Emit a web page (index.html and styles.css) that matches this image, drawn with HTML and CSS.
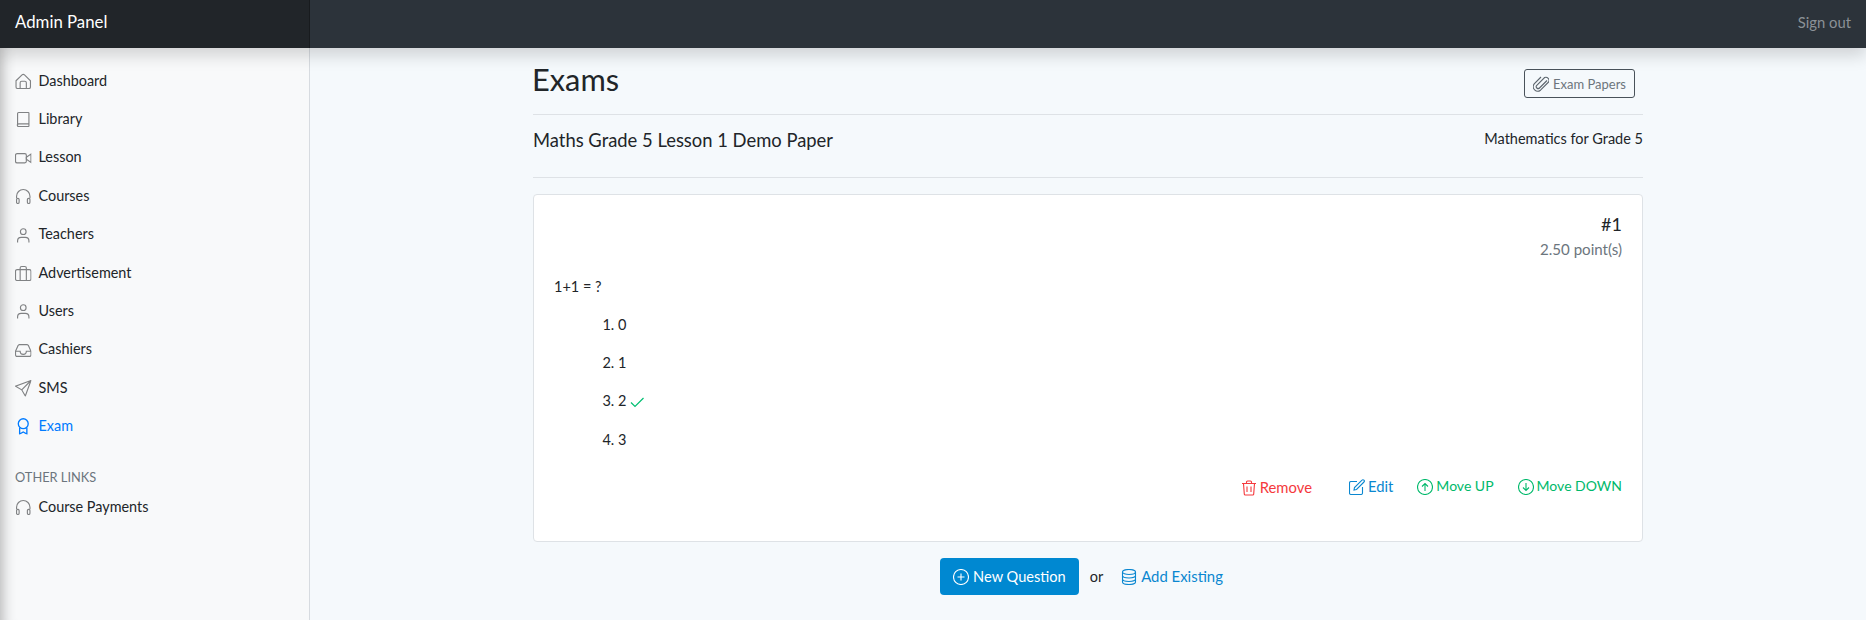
FILE: index.html
```html
<!DOCTYPE html>
<html lang="en">
<head>
<meta charset="utf-8">
<title>Admin Panel</title>
<link rel="stylesheet" href="styles.css">
</head>
<body>
<svg class="defs" width="0" height="0" aria-hidden="true">
  <symbol id="i-house" viewBox="0 0 16 16"><path d="M1 7.500 6.800 1.900a1.700 1.700 0 0 1 2.400 0L15 7.500v6a1.500 1.500 0 0 1-1.500 1.500h-11A1.500 1.500 0 0 1 1 13.500z"/><path d="M5 15V9.500a1.500 1.500 0 0 1 1.500-1.500h3A1.500 1.500 0 0 1 11 9.500V15"/></symbol>
  <symbol id="i-book" viewBox="0 0 16 16"><path d="M2.500 13V2.500a1 1 0 0 1 1-1h9.500a.5.500 0 0 1 .5.500V12.500H3.500a1.250 1.250 0 0 0 0 2.500H13a.5.500 0 0 0 .5-.5v-2"/><path d="M2.500 13v.750"/></symbol>
  <symbol id="i-video" viewBox="0 0 16 16"><rect x=".5" y="3.500" width="10.500" height="9" rx="1.500"/><path d="m11 7 4.500-3v8L11 9z"/></symbol>
  <symbol id="i-headphones" viewBox="0 0 16 16"><path d="M1.500 10V8a6.500 6.500 0 0 1 13 0v2"/><rect x="1.500" y="10" width="2.500" height="5" rx="1.250"/><rect x="12" y="10" width="2.500" height="5" rx="1.250"/></symbol>
  <symbol id="i-person" viewBox="0 0 16 16"><circle cx="8" cy="4.500" r="2.750"/><path d="M2.500 15v-1.500c0-2 1.500-3.500 3.500-3.500h4c2 0 3.500 1.500 3.500 3.500V15"/></symbol>
  <symbol id="i-briefcase" viewBox="0 0 16 16"><rect x=".5" y="4.500" width="15" height="10.500" rx="1.500"/><path d="M5 15V3a1.500 1.500 0 0 1 1.500-1.500h3A1.500 1.500 0 0 1 11 3v12"/></symbol>
  <symbol id="i-inbox" viewBox="0 0 16 16"><path d="M.5 9 3 3.500a1.500 1.500 0 0 1 1.300-1h7.400a1.500 1.500 0 0 1 1.300 1L15.500 9v3.500a1.500 1.500 0 0 1-1.500 1.500H2a1.500 1.500 0 0 1-1.500-1.500z"/><path d="M.5 9H5a3 3 0 0 0 6 0h4.500"/></symbol>
  <symbol id="i-send" viewBox="0 0 16 16"><path d="M15.500.5.500 6l6 3.500 3.500 6zM15.500.5l-9 9"/></symbol>
  <symbol id="i-award" viewBox="0 0 16 16"><circle cx="8" cy="5.500" r="4.800"/><path d="M4.500 9.500V15.500L8 13.500l3.500 2V9.500"/></symbol>
  <symbol id="i-clip" viewBox="0 0 16 16"><path d="M14 4.500 6.500 12a1.900 1.900 0 0 1-2.700-2.700l7.800-7.800a3.200 3.200 0 0 1 4 4.500L7.500 14.200a4.500 4.500 0 0 1-6.300-6.300L8 1"/></symbol>
  <symbol id="i-trash" viewBox="0 0 16 16"><path d="M1 3.500h14M5.500 3.500V2a1 1 0 0 1 1-1h3a1 1 0 0 1 1 1v1.500M2.500 3.500l.8 10.600a1 1 0 0 0 1 .9h7.400a1 1 0 0 0 1-.9l.8-10.600M6 6.500v5.500M10 6.500v5.500"/></symbol>
  <symbol id="i-edit" viewBox="0 0 16 16"><path d="M8 2.500H2A1.500 1.500 0 0 0 .5 4v10A1.500 1.500 0 0 0 2 15.500h10a1.500 1.500 0 0 0 1.500-1.500V8"/><path d="M13 1.200a1.300 1.300 0 0 1 2 1.800L7.500 10.500 5 11l.5-2.500z"/></symbol>
  <symbol id="i-up" viewBox="0 0 16 16"><circle cx="8" cy="8" r="7.500"/><path d="M8 12V4.800M5 7.500l3-3 3 3"/></symbol>
  <symbol id="i-down" viewBox="0 0 16 16"><circle cx="8" cy="8" r="7.500"/><path d="M8 4v7.200M5 8.500l3 3 3-3"/></symbol>
  <symbol id="i-plus" viewBox="0 0 16 16"><circle cx="8" cy="8" r="7.500"/><path d="M8 4.500v7M4.500 8h7"/></symbol>
  <symbol id="i-db" viewBox="0 0 16 16"><ellipse cx="8" cy="3" rx="6.500" ry="2.500"/><path d="M1.500 3v10c0 1.400 2.900 2.500 6.500 2.500s6.500-1.100 6.500-2.500V3M1.500 6.500c0 1.400 2.900 2.500 6.500 2.500s6.500-1.100 6.500-2.500M1.500 10c0 1.400 2.900 2.500 6.500 2.500s6.500-1.100 6.500-2.500"/></symbol>
  <symbol id="i-check" viewBox="0 0 16 16"><path d="M2 8.500 6 12.500 14.500 4"/></symbol>
</svg>

<header class="topbar">
  <a class="brand">Admin Panel</a>
  <div class="topbar-rest"><a class="signout">Sign out</a></div>
</header>

<div class="shell">
  <nav class="sidebar">
    <ul class="nav-list">
      <li class="nav-item"><svg class="ico"><use href="#i-house"/></svg><span>Dashboard</span></li>
      <li class="nav-item"><svg class="ico"><use href="#i-book"/></svg><span>Library</span></li>
      <li class="nav-item"><svg class="ico"><use href="#i-video"/></svg><span>Lesson</span></li>
      <li class="nav-item"><svg class="ico"><use href="#i-headphones"/></svg><span>Courses</span></li>
      <li class="nav-item"><svg class="ico"><use href="#i-person"/></svg><span>Teachers</span></li>
      <li class="nav-item"><svg class="ico"><use href="#i-briefcase"/></svg><span>Advertisement</span></li>
      <li class="nav-item"><svg class="ico"><use href="#i-person"/></svg><span>Users</span></li>
      <li class="nav-item"><svg class="ico"><use href="#i-inbox"/></svg><span>Cashiers</span></li>
      <li class="nav-item"><svg class="ico"><use href="#i-send"/></svg><span>SMS</span></li>
      <li class="nav-item is-active"><svg class="ico"><use href="#i-award"/></svg><span>Exam</span></li>
    </ul>
    <h6 class="nav-heading">OTHER LINKS</h6>
    <ul class="nav-list">
      <li class="nav-item"><svg class="ico"><use href="#i-headphones"/></svg><span>Course Payments</span></li>
    </ul>
  </nav>

  <main class="main">
    <div class="container">
      <div class="page-head">
        <h2 class="page-title">Exams</h2>
        <a class="btn-outline"><svg class="ico-btn"><use href="#i-clip"/></svg>Exam Papers</a>
      </div>
      <div class="paper-head">
        <h5 class="paper-title">Maths Grade 5 Lesson 1 Demo Paper</h5>
        <span class="paper-subject">Mathematics for Grade 5</span>
      </div>
      <section class="card">
        <div class="q-num">#1</div>
        <div class="q-points">2.50 point(s)</div>
        <p class="q-text">1+1 = ?</p>
        <ol class="answers">
          <li>0</li>
          <li>1</li>
          <li>2 <svg class="ico-check"><use href="#i-check"/></svg></li>
          <li>3</li>
        </ol>
        <div class="actions">
          <a class="act act-remove"><svg class="ico-act"><use href="#i-trash"/></svg>Remove</a>
          <a class="act act-edit"><svg class="ico-act"><use href="#i-edit"/></svg>Edit</a>
          <a class="act act-move"><svg class="ico-act"><use href="#i-up"/></svg>Move UP</a>
          <a class="act act-move"><svg class="ico-act"><use href="#i-down"/></svg>Move DOWN</a>
        </div>
      </section>
      <div class="footer-actions">
        <a class="btn-primary"><svg class="ico-act"><use href="#i-plus"/></svg>New Question</a>
        <span class="or">or</span>
        <a class="link-add"><svg class="ico-act"><use href="#i-db"/></svg>Add Existing</a>
      </div>
    </div>
  </main>
</div>
</body>
</html>
```

FILE: styles.css
```css
* { box-sizing: border-box; }
html, body { height: 100%; }
body {
  margin: 0;
  font-family: "Lato", "Noto Sans", sans-serif;
  font-size: 14.500px;
  color: #212529;
  background: #f5f9fc;
  overflow: hidden;
}
.defs { display: block; height: 0; }
svg { fill: none; stroke: currentColor; stroke-width: 1.100; flex: none; }

.topbar {
  position: relative;
  z-index: 2;
  display: flex;
  height: 48px;
  background: #2c333a;
  box-shadow: 0 8px 16px rgba(0, 0, 0, .15);
}
.brand {
  width: 310px;
  padding-left: 15px;
  line-height: 43px;
  font-size: 16.800px;
  color: #fff;
  background: #212529;
  box-shadow: inset -1px 0 0 rgba(0, 0, 0, .25);
}
.topbar-rest {
  flex: 1;
  display: flex;
  justify-content: flex-end;
  padding-right: 15px;
}
.signout { line-height: 45px; font-size: 14.800px; color: #8b9197; }

.shell { display: flex; height: 572px; }
.sidebar {
  width: 310px;
  padding-top: 13px;
  background: #f8f9fa;
  border-right: 1px solid #d7dbe0;
  box-shadow: inset 16px 0 14px -14px rgba(0, 0, 0, .3);
}
.nav-list { list-style: none; margin: 0; padding: 0; }
.nav-item {
  display: flex;
  align-items: center;
  gap: 7px;
  height: 38.400px;
  padding-left: 15px;
  font-size: 14.400px;
  color: #212529;
}
.ico { width: 16.500px; height: 16.500px; color: #808284; position: relative; top: 1px; }
.is-active, .is-active .ico { color: #007bff; }
.is-active .ico { stroke-width: 1.300; }
.nav-heading {
  margin: 18px 0 0;
  padding-left: 15px;
  height: 24px;
  line-height: 28px;
  font-size: 12.800px;
  font-weight: 400;
  color: #6c757d;
}

.main { flex: 1; display: flex; justify-content: center; }
.container { width: 1110px; }
.page-head {
  display: flex;
  justify-content: space-between;
  align-items: flex-start;
  height: 66.500px;
  border-bottom: 1px solid #dee2e6;
}
.page-title { margin: 14px 0 0 -1px; font-size: 30.800px; line-height: 36px; font-weight: 400; }
.btn-outline {
  display: flex;
  align-items: center;
  gap: 4px;
  margin: 21px 8px 0 0;
  height: 29px;
  padding: 0 8px;
  border: 1px solid #49525a;
  border-radius: 3px;
  font-size: 13px;
  color: #6c757d;
}
.ico-btn { width: 16px; height: 16px; color: #5c656d; }
.paper-head {
  display: flex;
  justify-content: space-between;
  height: 63px;
  border-bottom: 1px solid #dee2e6;
}
.paper-title { margin: 13px 0 0; font-size: 18.400px; line-height: 25px; font-weight: 400; }
.paper-subject { margin-top: 13px; line-height: 22px; }
.card {
  display: flow-root;
  height: 348px;
  margin-top: 16px;
  padding: 18px 20px 20px;
  background: #fff;
  border: 1px solid #dee2e6;
  border-radius: 4px;
}
.q-num { text-align: right; font-size: 18px; line-height: 22px; }
.q-points { margin-top: 3px; text-align: right; color: #6c757d; line-height: 22px; font-size: 15.100px; }
.q-text { margin: 16px 0 0; line-height: 22px; }
.answers { margin: 16px 0 0; padding-left: 64px; }
.answers li { height: 38.400px; line-height: 22px; }
.ico-check { width: 16px; height: 16px; color: #00bf72; stroke-width: 1.200; vertical-align: -4px; margin-left: -1px; }
.actions { display: flex; justify-content: flex-end; margin-top: 8px; align-items: center; }
.act { display: flex; align-items: center; gap: 3px; line-height: 22px; }
.ico-act { width: 16px; height: 16px; position: relative; top: 1px; }
.act-remove { color: #f5393d; margin-right: 37px; top: 1px; position: relative; font-size: 14.800px; }
.act-edit { color: #0a87d0; margin-right: 24px; font-size: 14.800px; }
.act-move { color: #00b96b; font-size: 14px; }
.act-move + .act-move { margin-left: 24px; }
.footer-actions { display: flex; align-items: center; justify-content: center; margin-top: 16px; padding-right: 13px; }
.btn-primary {
  display: flex;
  align-items: center;
  gap: 4px;
  height: 37px;
  padding: 0 13px;
  border-radius: 4px;
  background: #0088d1;
  color: #fff;
  font-size: 14.600px;
}
.or { margin: 0 18px 0 11px; }
.link-add { display: flex; align-items: center; gap: 4px; color: #0a87d0; font-size: 14.900px; }
```
